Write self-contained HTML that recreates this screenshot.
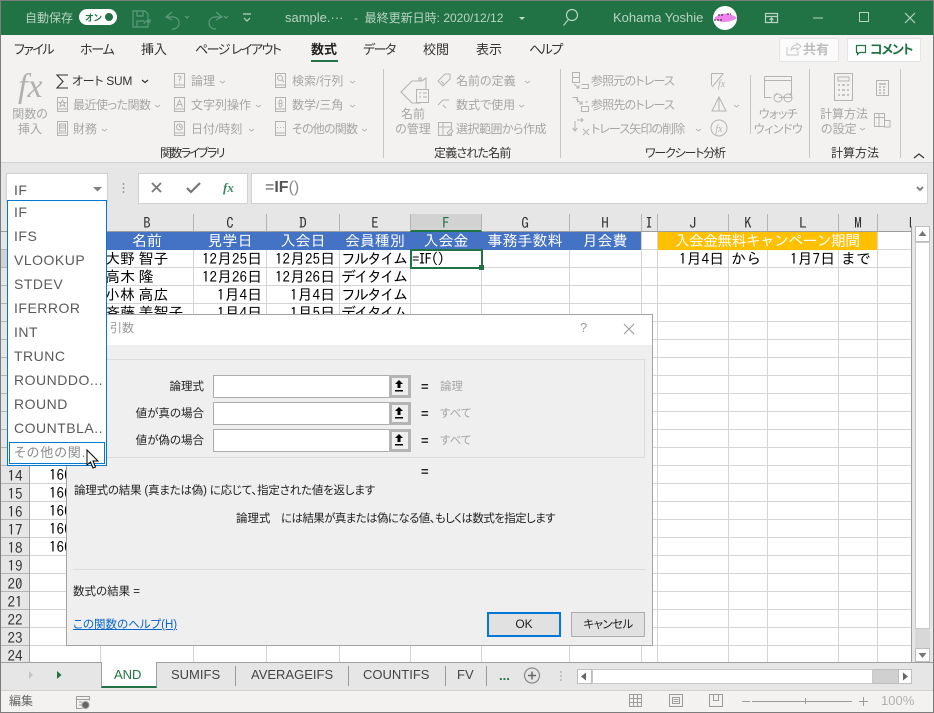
<!DOCTYPE html>
<html lang="ja"><head><meta charset="utf-8"><title>sample</title>
<style>
*{box-sizing:border-box}
html,body{margin:0;padding:0}
body{width:934px;height:713px;overflow:hidden;position:relative;background:#e6e6e6;font-family:"Liberation Sans","Noto Sans CJK JP",sans-serif;font-feature-settings:"palt";color:#333}
.a{position:absolute}
.t{position:absolute;white-space:nowrap;line-height:16px;height:16px;font-size:12px}
.d{color:#a6a6a6}
.c{text-align:center;transform:translateX(-50%)}
.r{text-align:right;transform:translateX(-100%)}
.tab{font-size:13px;color:#333;top:42px}
.w{color:#b8d3c2;font-size:12px}
.g{font-family:"IPAGothic","Liberation Sans",sans-serif;font-size:15px;color:#000;font-feature-settings:normal;line-height:18px;height:18px}
.h{color:#fff;top:232px}
.n{word-spacing:-4px}
.k{letter-spacing:-2px}
.col{font-family:"IPAGothic",sans-serif;font-size:15px;top:215px;color:#333;font-feature-settings:normal}
.rn{font-family:"IPAGothic",sans-serif;font-size:15px;left:15px;color:#333;font-feature-settings:normal}
.li{font-size:14px;left:14px;color:#5a5a5a;letter-spacing:.5px}
.sh{font-size:13px;top:667px;color:#444}
.dl{font-size:11.5px;color:#222}
.inp{position:absolute;left:213px;width:198px;height:23px;background:#fff;border:1px solid #adadad}
.btn{position:absolute;left:389px;width:22px;height:23px;background:#efefef;border:3px solid #b4b4b4;border-width:3px 3px 3px 3px}
svg{position:absolute;left:0;top:0}
</style></head><body>

<!-- ribbon bases -->
<div class="a" style="left:0;top:0;width:934px;height:35px;background:#217346"></div>
<div class="a" style="left:0;top:35px;width:934px;height:127px;background:#f3f2f1"></div>
<div class="a" style="left:0;top:162px;width:934px;height:1px;background:#d2d2d2"></div>

<!-- title bar -->
<div class="t w" style="left:25px;top:10px">自動保存</div>
<div class="a" style="left:79px;top:9px;width:38px;height:16px;border-radius:8px;background:#fff"></div>
<div class="t" style="left:85px;top:11px;font-size:9px;line-height:14px;color:#217346;font-weight:bold">オン</div>
<div class="a" style="left:105px;top:13px;width:8px;height:8px;border-radius:50%;background:#217346"></div>
<div class="t w" style="left:285px;top:10px;font-size:13px">sample.···</div>
<div class="t w" style="left:354px;top:10px">-&nbsp; 最終更新日時: 2020/12/12</div>
<div class="t w" style="left:613px;top:10px;font-size:13px">Kohama Yoshie</div>

<!-- ribbon tabs -->
<div class="t tab" style="left:14px;letter-spacing:-1.5px">ファイル</div>
<div class="t tab" style="left:80px;letter-spacing:-1.2px">ホーム</div>
<div class="t tab" style="left:141px">挿入</div>
<div class="t tab" style="left:195px;letter-spacing:-1.5px">ページ レイアウト</div>
<div class="t tab" style="left:311px;font-weight:bold;color:#222">数式</div>
<div class="a" style="left:311px;top:60px;width:27px;height:2px;background:#217346"></div>
<div class="t tab" style="left:363px;letter-spacing:-1.5px">データ</div>
<div class="t tab" style="left:423px">校閲</div>
<div class="t tab" style="left:476px">表示</div>
<div class="t tab" style="left:529px;letter-spacing:-1.5px">ヘルプ</div>
<div class="a" style="left:779px;top:38px;width:60px;height:24px;background:#fbfbfb;border:1px solid #e3e3e3;border-radius:2px"></div>
<div class="t d" style="left:803px;top:42px;font-size:13px;font-weight:bold;color:#bdbdbd">共有</div>
<div class="a" style="left:847px;top:38px;width:74px;height:24px;background:#fff;border:1px solid #e3e3e3;border-radius:2px"></div>
<div class="t" style="left:870px;top:42px;font-size:13px;font-weight:bold;color:#217346;letter-spacing:-1.2px">コメント</div>

<!-- ribbon group 1 -->
<div class="t" style="left:18px;top:70px;font-family:'Liberation Serif',serif;font-style:italic;font-size:34px;line-height:34px;height:34px;color:#b0b0b0">fx</div>
<div class="t d c" style="left:30px;top:106px">関数の</div>
<div class="t d c" style="left:30px;top:121px">挿入</div>
<div class="t" style="left:72px;top:73px;color:#333;letter-spacing:-.3px">オート SUM</div>
<div class="t d" style="left:73px;top:97px;letter-spacing:-.5px">最近使った関数</div>
<div class="t d" style="left:73px;top:121px">財務</div>
<div class="t d" style="left:191px;top:73px">論理</div>
<div class="t d" style="left:191px;top:97px">文字列操作</div>
<div class="t d" style="left:191px;top:121px">日付/時刻</div>
<div class="t d" style="left:292px;top:73px">検索/行列</div>
<div class="t d" style="left:292px;top:97px">数学/三角</div>
<div class="t d" style="left:292px;top:121px;letter-spacing:-.8px">その他の関数</div>
<div class="t" style="left:160px;top:145px;color:#333;letter-spacing:-1.7px">関数ライブラリ</div>
<!-- group 2 -->
<div class="t d c" style="left:413px;top:106px">名前</div>
<div class="t d c" style="left:413px;top:121px">の管理</div>
<div class="t d" style="left:456px;top:73px">名前の定義</div>
<div class="t d" style="left:456px;top:97px">数式で使用</div>
<div class="t d" style="left:456px;top:121px;letter-spacing:-.5px">選択範囲から作成</div>
<div class="t" style="left:434px;top:145px;color:#333;letter-spacing:-.8px">定義された名前</div>
<!-- group 3 -->
<div class="t d" style="left:591px;top:73px;letter-spacing:-.8px">参照元のトレース</div>
<div class="t d" style="left:591px;top:97px;letter-spacing:-.8px">参照先のトレース</div>
<div class="t d" style="left:591px;top:121px;letter-spacing:-.9px">トレース矢印の削除</div>
<div class="t d c" style="left:778px;top:106px;letter-spacing:-.5px">ウォッチ</div>
<div class="t d c" style="left:778px;top:121px;letter-spacing:-.5px">ウィンドウ</div>
<div class="t" style="left:645px;top:145px;color:#333;letter-spacing:-1.2px">ワークシート分析</div>
<!-- group 4 -->
<div class="t d c" style="left:844px;top:106px">計算方法</div>
<div class="t d" style="left:821px;top:121px">の設定</div>
<div class="t c" style="left:855px;top:145px;color:#333">計算方法</div>

<!-- formula bar -->
<div class="a" style="left:6px;top:173px;width:102px;height:30px;background:#fff;border:1px solid #d0d0d0"></div>
<div class="t" style="left:14px;top:182px;font-size:14px;color:#555;letter-spacing:.5px">IF</div>
<div class="a" style="left:138px;top:173px;width:110px;height:31px;background:#fff;border:1px solid #d0d0d0"></div>
<div class="a" style="left:251px;top:173px;width:677px;height:31px;background:#fff;border:1px solid #d0d0d0"></div>
<div class="t" style="left:265px;top:180px;font-size:16px;color:#555">=<b>IF</b><span style="color:#888">()</span></div>
<div class="t" style="left:223px;top:180px;font-family:'Liberation Serif',serif;font-style:italic;font-weight:bold;font-size:13px;color:#3c8a5c">fx</div>

<!-- grid -->
<div class="a" style="left:30px;top:232px;width:881px;height:430px;background:#fff;background-image:repeating-linear-gradient(to bottom,transparent 0,transparent 17px,#d4d4d4 17px,#d4d4d4 18px)"></div>
<svg width="934" height="713" style="pointer-events:none">
<g stroke="#d4d4d4" stroke-width="1">
<path d="M100.5 232V662M193.5 232V662M266.5 232V662M339.5 232V662M410.5 232V662M481.5 232V662M569.5 232V662M641.5 232V662M657.5 232V662M728.5 232V662M767.5 232V662M838.5 232V662M877.5 232V662"/>
</g>
</svg>
<div class="a" style="left:1px;top:231px;width:910px;height:1px;background:#9e9e9e"></div>
<div class="a" style="left:410px;top:214px;width:72px;height:18px;background:#d2d2d2;border-bottom:2px solid #217346"></div>
<div class="a" style="left:1px;top:250px;width:29px;height:18px;background:#d2d2d2"></div>
<svg width="934" height="713">
<g stroke="#b4b4b4" stroke-width="1">
<path d="M100.5 214V231M193.5 214V231M266.5 214V231M339.5 214V231M410.5 214V231M481.5 214V231M569.5 214V231M641.5 214V231M657.5 214V231M728.5 214V231M767.5 214V231M838.5 214V231M877.5 214V231"/>
<path d="M1 249.5H30M1 267.5H30M1 285.5H30M1 303.5H30M1 321.5H30M1 339.5H30M1 357.5H30M1 375.5H30M1 393.5H30M1 411.5H30M1 429.5H30M1 447.5H30M1 465.5H30M1 483.5H30M1 501.5H30M1 519.5H30M1 537.5H30M1 555.5H30M1 573.5H30M1 591.5H30M1 609.5H30M1 627.5H30M1 645.5H30"/>
<path d="M29.500 232V662M911.500 226V662" stroke="#9e9e9e"/>
</g>
</svg>
<div class="t col c" style="left:147px">B</div>
<div class="t col c" style="left:230px">C</div>
<div class="t col c" style="left:303px">D</div>
<div class="t col c" style="left:375px">E</div>
<div class="t col c" style="left:446px;color:#217346">F</div>
<div class="t col c" style="left:525px">G</div>
<div class="t col c" style="left:605px">H</div>
<div class="t col c" style="left:649px">I</div>
<div class="t col c" style="left:693px">J</div>
<div class="t col c" style="left:748px">K</div>
<div class="t col c" style="left:803px">L</div>
<div class="t col c" style="left:858px">M</div>
<div class="a" style="left:900px;top:214px;width:11px;height:17px;overflow:hidden"><div class="t col" style="left:9px;top:1px">N</div></div>

<!-- header band -->
<div class="a" style="left:100px;top:232px;width:541px;height:18px;background:#4472c4"></div>
<div class="a" style="left:658px;top:232px;width:219px;height:18px;background:#ffc000"></div>
<div class="t g h c" style="left:147px">名前</div>
<div class="t g h c" style="left:230px">見学日</div>
<div class="t g h c" style="left:303px">入会日</div>
<div class="t g h c" style="left:375px">会員種別</div>
<div class="t g h c" style="left:446px">入会金</div>
<div class="t g h c" style="left:525px">事務手数料</div>
<div class="t g h c" style="left:605px">月会費</div>
<div class="t g h c" style="left:767px;letter-spacing:-.8px">入会金無料キャンペーン期間</div>

<!-- rows -->
<div class="t g n" style="left:105px;top:250px">大野 智子</div>
<div class="t g n" style="left:105px;top:268px">高木 隆</div>
<div class="t g n" style="left:105px;top:286px">小林 高広</div>
<div class="t g n" style="left:105px;top:304px">斉藤 美智子</div>
<div class="t g r" style="left:262px;top:250px">12月25日</div>
<div class="t g r" style="left:262px;top:268px">12月26日</div>
<div class="t g r" style="left:262px;top:286px">1月4日</div>
<div class="t g r" style="left:262px;top:304px">1月4日</div>
<div class="t g r" style="left:335px;top:250px">12月25日</div>
<div class="t g r" style="left:335px;top:268px">12月26日</div>
<div class="t g r" style="left:335px;top:286px">1月4日</div>
<div class="t g r" style="left:335px;top:304px">1月5日</div>
<div class="t g k" style="left:341px;top:250px">フルタイム</div>
<div class="t g k" style="left:341px;top:268px">デイタイム</div>
<div class="t g k" style="left:341px;top:286px">フルタイム</div>
<div class="t g k" style="left:341px;top:304px">デイタイム</div>
<div class="a" style="left:410px;top:249px;width:73px;height:20px;border:2px solid #217346"></div>
<div class="a" style="left:479px;top:265px;width:5px;height:5px;background:#217346;border:0"></div>
<div class="t g" style="left:412px;top:250px;letter-spacing:-1.2px">=IF()</div>
<div class="t g r" style="left:724px;top:250px">1月4日</div>
<div class="t g" style="left:731px;top:250px">から</div>
<div class="t g r" style="left:835px;top:250px">1月7日</div>
<div class="t g" style="left:841px;top:250px">まで</div>
<div class="t g" style="left:49px;top:466px">160</div>
<div class="t g" style="left:49px;top:484px">160</div>
<div class="t g" style="left:49px;top:502px">160</div>
<div class="t g" style="left:49px;top:520px">160</div>
<div class="t g" style="left:49px;top:538px">160</div>
<div class="t rn c" style="top:468px">14</div>
<div class="t rn c" style="top:486px">15</div>
<div class="t rn c" style="top:504px">16</div>
<div class="t rn c" style="top:522px">17</div>
<div class="t rn c" style="top:540px">18</div>
<div class="t rn c" style="top:558px">19</div>
<div class="t rn c" style="top:576px">20</div>
<div class="t rn c" style="top:594px">21</div>
<div class="t rn c" style="top:612px">22</div>
<div class="t rn c" style="top:630px">23</div>
<div class="t rn c" style="top:648px">24</div>

<!-- vertical scrollbar -->
<div class="a" style="left:915px;top:226px;width:15px;height:436px;background:#d8d8d8"></div>
<div class="a" style="left:915px;top:226px;width:15px;height:16px;background:#fff;border:1px solid #bdbdbd"></div>
<div class="a" style="left:915px;top:242px;width:15px;height:387px;background:#fff;border:1px solid #c8c8c8"></div>
<div class="a" style="left:915px;top:648px;width:15px;height:14px;background:#fff;border:1px solid #bdbdbd"></div>

<!-- dialog -->
<div class="a" style="left:66px;top:314px;width:587px;height:332px;background:#efefef;border:1px solid #a4a4a4">
  <div class="a" style="left:0;top:0;width:585px;height:30px;background:#fff"></div>
</div>
<div class="t" style="left:110px;top:320px;color:#999">引数</div>
<div class="t" style="left:580px;top:320px;color:#999;font-size:13px">?</div>
<div class="a" style="left:72px;top:359px;width:573px;height:99px;border:1px solid #dcdcdc"></div>
<div class="t dl r" style="left:204px;top:379px">論理式</div>
<div class="t dl r" style="left:204px;top:406px">値が真の場合</div>
<div class="t dl r" style="left:204px;top:433px">値が偽の場合</div>
<div class="inp" style="top:375px"></div>
<div class="inp" style="top:402px"></div>
<div class="inp" style="top:429px"></div>
<div class="btn" style="top:375px"></div>
<div class="btn" style="top:402px"></div>
<div class="btn" style="top:429px"></div>
<div class="t dl" style="left:421px;top:379px;font-size:13px;font-weight:bold">=</div>
<div class="t dl" style="left:421px;top:406px;font-size:13px;font-weight:bold">=</div>
<div class="t dl" style="left:421px;top:433px;font-size:13px;font-weight:bold">=</div>
<div class="t dl" style="left:421px;top:464px;font-size:13px;font-weight:bold">=</div>
<div class="t dl" style="left:440px;top:379px;color:#a6a6a6">論理</div>
<div class="t dl" style="left:440px;top:406px;color:#a6a6a6">すべて</div>
<div class="t dl" style="left:440px;top:433px;color:#a6a6a6">すべて</div>
<div class="t dl" style="left:74px;top:483px;letter-spacing:-.2px">論理式の結果 (真または偽) に応じて、指定された値を返します</div>
<div class="t dl" style="left:236px;top:511px">論理式</div>
<div class="t dl" style="left:281px;top:511px;letter-spacing:-.6px">には結果が真または偽になる値、もしくは数式を指定します</div>
<div class="a" style="left:73px;top:569px;width:573px;height:1px;background:#dcdcdc"></div>
<div class="t dl" style="left:73px;top:584px">数式の結果 =</div>
<div class="t dl" style="left:73px;top:617px;color:#0a66c8;text-decoration:underline">この関数のヘルプ(H)</div>
<div class="a" style="left:487px;top:612px;width:74px;height:25px;background:#e1e1e1;border:2px solid #0078d7"></div>
<div class="t c" style="left:524px;top:616px;color:#222">OK</div>
<div class="a" style="left:571px;top:612px;width:74px;height:25px;background:#e1e1e1;border:1px solid #adadad"></div>
<div class="t c" style="left:608px;top:617px;color:#222;font-size:11.5px;letter-spacing:-.6px">キャンセル</div>

<!-- dropdown -->
<div class="a" style="left:7px;top:200px;width:100px;height:266px;background:#fff;border:1px solid #0078d4"></div>
<div class="t li" style="top:204px">IF</div>
<div class="t li" style="top:228px">IFS</div>
<div class="t li" style="top:252px">VLOOKUP</div>
<div class="t li" style="top:276px">STDEV</div>
<div class="t li" style="top:300px">IFERROR</div>
<div class="t li" style="top:324px">INT</div>
<div class="t li" style="top:348px">TRUNC</div>
<div class="t li" style="top:372px">ROUNDDO...</div>
<div class="t li" style="top:396px">ROUND</div>
<div class="t li" style="top:420px">COUNTBLA..</div>
<div class="a" style="left:9px;top:442px;width:96px;height:22px;border:1px solid #0078d4"></div>
<div class="t li" style="top:445px;font-size:13px;color:#8a8a8a;letter-spacing:1px">その他の関...</div>

<!-- sheet tabs -->
<div class="a" style="left:0;top:662px;width:934px;height:1px;background:#a0a0a0"></div>
<div class="a" style="left:0;top:663px;width:934px;height:27px;background:#e6e6e6"></div>
<div class="a" style="left:101px;top:662px;width:56px;height:26px;background:#fff;border:1px solid #a0a0a0;border-top:0;border-bottom:2px solid #217346"></div>
<div class="t sh" style="left:114px;color:#217346">AND</div>
<div class="t sh" style="left:171px">SUMIFS</div>
<div class="t sh" style="left:251px">AVERAGEIFS</div>
<div class="t sh" style="left:363px">COUNTIFS</div>
<div class="t sh" style="left:457px">FV</div>
<div class="t" style="left:499px;top:668px;color:#217346;font-weight:bold;font-size:13px">...</div>
<div class="a" style="left:577px;top:669px;width:335px;height:15px;background:#d0d0d0;border:1px solid #bdbdbd"></div>
<div class="a" style="left:577px;top:669px;width:15px;height:15px;background:#fff;border:1px solid #bdbdbd"></div>
<div class="a" style="left:592px;top:669px;width:281px;height:15px;background:#fff;border:1px solid #c8c8c8"></div>
<div class="a" style="left:898px;top:669px;width:14px;height:15px;background:#fff;border:1px solid #bdbdbd"></div>

<!-- status -->
<div class="a" style="left:0;top:690px;width:934px;height:23px;background:#f3f2f1;border-top:1px solid #d2d2d2"></div>
<div class="t" style="left:9px;top:693px;color:#666">編集</div>
<div class="t" style="left:881px;top:693px;color:#b0b0b0;font-size:13px">100%</div>

<!-- icons -->
<svg width="934" height="713" fill="none">
<!-- title icons -->
<g stroke="#5c9a7c" stroke-width="1.2">
<path d="M133 11h12l3 3v13h-15zM137 11v5h6v-5M137 27v-6h7"/>
<path d="M144 24a3.500 3.500 0 0 1 6-2M150 19v3h-3M172 12l-6 5 6 3M166 17h7a6 6 0 0 1 0 12h-1M216 12l6 5-6 3M222 17h-7a6 6 0 0 0 0 12h1"/>
<path d="M185 16l2 2 2-2M224 16l2 2 2-2"/>
<path d="M243 14h8M244 18l3 3 3-3" stroke="#b8d3c2"/>
</g>
<path d="M519 17l3 3 3-3z" fill="#c3dacb"/>
<g stroke="#b8d3c2" stroke-width="1.200">
<circle cx="572" cy="15" r="5.500"/><path d="M568 20l-4.500 5.500"/>
<path d="M765.500 13.500h12v9h-12zM765.500 16.500h12M771.500 22v-4M769.500 20l2-2 2 2"/>
<path d="M813 18h10" stroke-width="1"/><rect x="859.500" y="12.500" width="9" height="9" stroke-width="1"/>
<path d="M905 13l10 10M915 13l-10 10"/>
</g>
<circle cx="725" cy="18" r="12" fill="#fff"/>
<path d="M714 18q8-6 14-4 6 1 9 4-6 4-13 4-6 0-10-4z" fill="#ee82ee"/>
<path d="M714 20h8M718 15h5M727 14h4" stroke="#222" stroke-width="1" stroke-dasharray="2 1"/>
<!-- share / comment -->
<path d="M787 47v8h11v-4M791 50q1-5 6-5v-2l4 3.500-4 3.500v-2q-4 0-6 2z" stroke="#c4c4c4"/>
<path d="M856.500 45.500h9v7h-6l-2 2v-2h-1z" stroke="#217346" stroke-width="1.200"/>
<!-- Sigma + carets -->
<path d="M68 75H57l6 6.500-6 6.500h11" stroke="#333" stroke-width="1.100"/>
<path d="M142 80l3 2.500 3-2.500" stroke="#333" stroke-width="1.200"/>
<g stroke="#b4b4b4" stroke-width="1">
<path d="M155 105l2.500 2 2.500-2M102 129l2.500 2 2.500-2M220 81l2.500 2 2.500-2M256 105l2.500 2 2.500-2M249 129l2.500 2 2.500-2M350 81l2.500 2 2.500-2M350 105l2.500 2 2.500-2M362 129l2.500 2 2.500-2M525 81l2.500 2 2.500-2M519 105l2.500 2 2.500-2M696 129l2.500 2 2.500-2M734 105l2.500 2 2.500-2M860 128l2.500 2 2.500-2"/>
<!-- books -->
<path d="M174.500 73.500h10v14h-10zM174.500 85h10M275.500 73.500h10v14h-10zM275.500 85h10M174.500 97.500h10v14h-10zM174.500 109h10M275.500 97.500h10v14h-10zM275.500 109h10M174.500 121.500h10v14h-10zM174.500 133h10M275.500 121.500h10v14h-10zM275.500 133h10M57.500 97.500h10v14h-10zM57.500 109h10M57.500 121.500h10v14h-10zM57.500 133h10"/>
<path d="M178 77q1.500-2 3 0 0 1.500-1.500 2.500v1.500M179.500 82.500v1M62.500 100l1 2.500h2.500l-2 1.500 1 2.500-2.500-1.500-2.500 1.500 1-2.500-2-1.500h2.500zM59.500 124h6v7h-6zM59.500 126h6M59.500 128h6"/>
<circle cx="280" cy="78" r="2.500"/><path d="M282 80l2 2M176.500 107l3-7 3 7M178 104.500h3"/>
<circle cx="179.500" cy="127" r="3"/><path d="M179.500 125v2h2M280.500 100c-2 0-2 7 0 7s2-7 0-7zM278.500 103.500h4M277 127.500h1M280 127.500h1M283 127.500h1"/>
<!-- names -->
<path d="M401 92l11-11h10l4-3v19h-6v6h-8z" stroke-width="1.100"/>
<circle cx="420" cy="79" r="1.200"/>
<path d="M416.500 89.500h12v13h-12zM419 93h2M423 93h4M419 97h2M423 97h4" fill="#f3f2f1"/>
<path d="M438 81l7-7h5v5l-7 7zM441 81l3 3M438 105l5-5h6M443 105l3 3M438.500 122.500h13v13h-13zM438.500 127h13M443 122.500v13"/>
<path d="M447 133l4-4 2 2-4 4z" fill="#f3f2f1"/>
<!-- trace -->
<path d="M572.500 72.500h7v10h-7zM572.500 77.500h7M581.500 84.500h7v4h-7M574 84l5 4M576 88h3v-3"/>
<path d="M572.500 97.500h5v5M581.500 106.500h7v5h-7zM581.500 106v6M576 99l6 5M579 104h3v-3M585 102h3"/>
<path d="M575 121v10M572.500 128l2.500 3 2.500-3M577 120h6M581 118l2 2-2 2M583 129l6 6M589 129l-6 6"/>
<!-- audit -->
<path d="M711.500 73.500h12M711.500 73.500v12M712 87l11-13M719 97l-7 14h14zM719 97v14"/>
<circle cx="719" cy="128" r="8"/>
<text x="718" y="87" font-family="Liberation Serif" font-style="italic" font-size="10" fill="#b4b4b4" stroke="none">fx</text>
<text x="719" y="132" text-anchor="middle" font-family="Liberation Serif" font-style="italic" font-size="10" fill="#b4b4b4" stroke="none">fx</text>
<!-- watch -->
<path d="M764.500 76.500h27v21h-13M764.500 80.500h27M764.500 76.500v21h7"/>
<circle cx="778" cy="98" r="4"/><circle cx="788" cy="98" r="4"/><path d="M782 97h2M774 96l3-3M792 96l-2-3"/>
<!-- calc -->
<path d="M834.500 73.500h18v27h-18zM876.500 80.500h12v15h-12zM874.500 113.500h10v13h-10zM874.500 117.500h10M879 113.500v13M884.500 120.500h5.500v6.500h-5.500zM838 77h11v4h-11z"/>
<path d="M838 85h2M842 85h3M847 85h2M838 90h2M842 90h3M847 90h2M838 95h2M842 95h3M847 95h2M879 84h7M879 87h2M883 87h2M879 90h2M883 90h2M879 93h2M883 93h2" stroke-width="1.500"/>
</g>
<path d="M914 158l5-4 5 4" stroke="#333" stroke-width="1.200"/>
<!-- separators -->
<path d="M383.500 69V158M560.500 69V158M809.500 69V158M900.500 69V158M750.500 75V134" stroke="#c6c6c6"/>
<!-- formula icons -->
<path d="M93 187h9l-4.500 4.500z" fill="#808080"/>
<path d="M123.500 183v2M123.500 187v2M123.500 191v2" stroke="#9a9a9a" stroke-width="1.500"/>
<path d="M152 183l9 9M161 183l-9 9" stroke="#777" stroke-width="1.800"/>
<path d="M187 188l4 4 9-9" stroke="#777" stroke-width="2.200"/>
<path d="M917 187l3 3 3-3" stroke="#777" stroke-width="1.800"/>
<!-- dialog close -->
<path d="M624 324l10 10M634 324l-10 10" stroke="#999" stroke-width="1"/>
<!-- refedit arrows -->
<g fill="#000"><path d="M399 380l-4 4h2.500v4h3v-4h2.500zM395 390h8v1.500h-8zM399 407l-4 4h2.500v4h3v-4h2.500zM395 417h8v1.500h-8zM399 434l-4 4h2.500v4h3v-4h2.500zM395 444h8v1.500h-8z"/></g>
<!-- cursor -->
<path d="M87 450v15l3.500-3 2.500 6 2.500-1-2.500-6h5z" fill="#fff" stroke="#000" stroke-width="1"/>
<!-- scroll arrows -->
<path d="M922.500 231l-4 5h8zM922.500 658l-4-5h8z" fill="#777"/>
<path d="M581 676.500l5-4v8zM908 676.500l-5-4v8z" fill="#666"/>
<path d="M33 675l-4-4v8z" fill="#c4c4c4"/>
<path d="M57 671l4.500 4-4.500 4z" fill="#217346"/>
<!-- tab separators -->
<path d="M235.500 666V686M348.500 666V686M445.500 666V686M486.500 666V686" stroke="#9a9a9a"/>
<circle cx="532" cy="675.500" r="7.500" stroke="#8a8a8a" stroke-width="1.200"/>
<path d="M528 675.500h8M532 671.500v8" stroke="#666" stroke-width="1.500"/>
<path d="M561 671v2M561 675v2M561 679v2" stroke="#b8b8b8" stroke-width="1.500"/>
<!-- status icons -->
<g stroke="#9c9c9c">
<path d="M76.500 696.500h13v4M76.500 696.500v12h6M76.500 699.500h13M79 702h3M79 705h3"/>
<circle cx="85.500" cy="705" r="3.500" fill="#666"/>
<path d="M629.500 694.500h12v12h-12zM629.500 698.500h12M629.500 702.500h12M633.500 694.500v12M637.500 694.500v12"/>
<path d="M669.500 694.500h13v12h-13zM672.500 697.500h7v6h-7zM673.500 699.500h5M673.500 701.500h5"/>
<path d="M709.500 694.500h13v12h-13zM713.500 694.500v6h5v-6"/>
<path d="M742 701.500h8M752 701.500h100M805.500 698v6M859 701.500h9M863.500 697v9"/>
</g>
</svg>

<!-- window border -->
<div class="a" style="left:0;top:0;width:934px;height:713px;border:1px solid #7c7c7c;pointer-events:none"></div>
</body></html>
